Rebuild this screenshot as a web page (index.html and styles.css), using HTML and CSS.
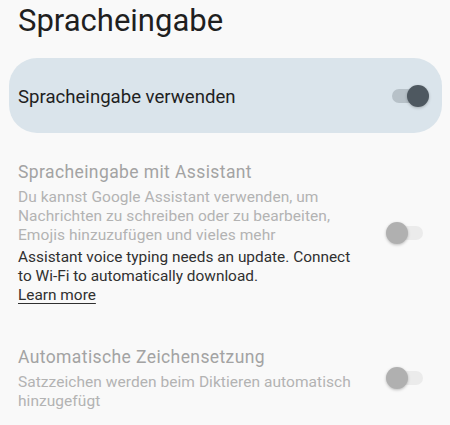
FILE: index.html
```html
<!DOCTYPE html>
<html lang="de">
<head>
<meta charset="utf-8">
<link rel="stylesheet" href="styles.css">
</head>
<body>
<h1 class="page-title">Spracheingabe</h1>
<div class="main-card">
  <span class="main-label">Spracheingabe verwenden</span>
  <span class="switch switch-on"><span class="thumb"></span></span>
</div>
<div class="setting setting-assistant">
  <div class="setting-text">
    <div class="setting-title">Spracheingabe mit Assistant</div>
    <div class="setting-desc">Du kannst Google Assistant verwenden, um Nachrichten zu schreiben oder zu bearbeiten, Emojis hinzuzufügen und vieles mehr</div>
    <div class="setting-warn">Assistant voice typing needs an update. Connect<br>to Wi-Fi to automatically download.<br><a class="learn" href="#">Learn more</a></div>
  </div>
  <span class="switch switch-off"><span class="thumb"></span></span>
</div>
<div class="setting setting-punct">
  <div class="setting-text">
    <div class="setting-title">Automatische Zeichensetzung</div>
    <div class="setting-desc">Satzzeichen werden beim Diktieren automatisch hinzugefügt</div>
  </div>
  <span class="switch switch-off"><span class="thumb"></span></span>
</div>
</body>
</html>
```
FILE: styles.css
```css
html, body {
  margin: 0;
  padding: 0;
  background: #f9f9f9;
  font-family: Roboto, "Noto Sans", sans-serif;
  width: 450px;
  height: 425px;
  overflow: hidden;
}
.page-title {
  margin: 0;
  padding: 2px 0 0 18px;
  font-size: 31px;
  line-height: 38px;
  font-weight: 400;
  color: #1f1f1f;
}
.main-card {
  margin: 18px 8px 0 9px;
  height: 75px;
  border-radius: 28px;
  background: #dae4eb;
  display: flex;
  align-items: center;
  justify-content: space-between;
  padding: 0 14px 0 9px;
}
.main-label {
  font-size: 18.6px;
  color: #1f1f1f;
  padding-top: 2px;
}
.setting {
  display: flex;
  align-items: center;
  padding: 0 27px 0 18px;
}
.setting-assistant { margin-top: 27px; }
.setting-punct { margin-top: 40px; }
.setting-text {
  flex: 1;
  max-width: 350px;
}
.setting-title {
  font-size: 17.5px;
  letter-spacing: 0.4px;
  line-height: 24px;
  color: #a3a3a3;
}
.setting-desc {
  margin-top: 4px;
  font-size: 15.5px;
  letter-spacing: 0.05px;
  line-height: 19px;
  color: #b3b3b3;
}
.setting-warn {
  margin-top: 3px;
  font-size: 15.4px;
  line-height: 19px;
  color: #303030;
}
.learn {
  color: #303030;
  text-decoration: underline;
  text-underline-offset: 3px;
}
.switch {
  position: relative;
  width: 36px;
  height: 14px;
  border-radius: 7px;
  flex: none;
  margin-left: auto;
}
.switch .thumb {
  position: absolute;
  top: -4px;
  width: 22px;
  height: 22px;
  border-radius: 50%;
  box-shadow: 0 1px 3px rgba(0,0,0,0.25);
}
.switch-on { background: #b7c1c8; }
.switch-on .thumb { right: -1px; background: #4e5860; }
.switch-off { background: #ebebeb; }
.switch-off .thumb { left: -1px; background: #b0b0b0; }
```
